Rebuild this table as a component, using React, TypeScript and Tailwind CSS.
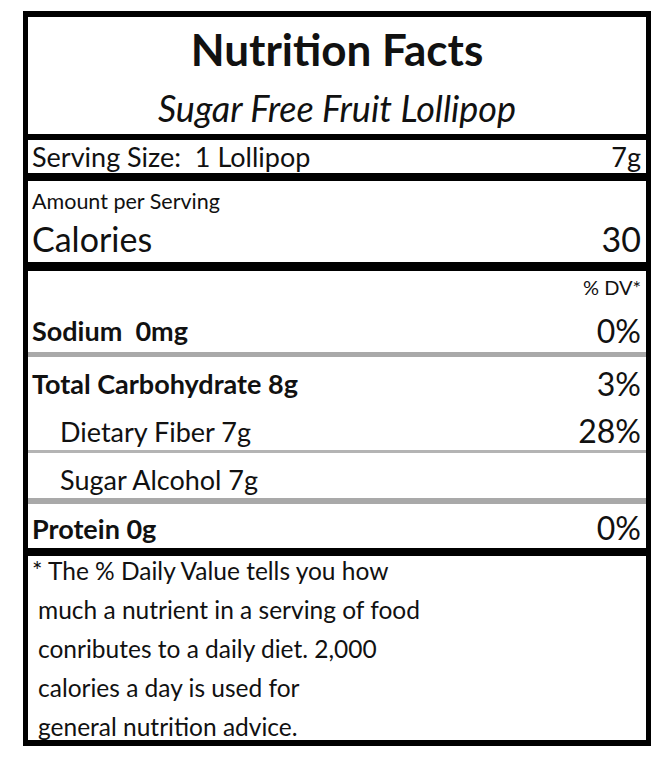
import React from 'react';

const rows = [
  { label: 'Total Carbohydrate 8g', value: '3%', bold: true },
];

export default function App() {
  return (
    <div className="min-h-[763px] w-[670px] bg-white pt-[11px] pl-[23px] text-[#111]" style={{ fontFamily: 'Lato, "Open Sans", sans-serif' }}>
      <div className="w-[628px] border-x-[5px] border-y-[6px] border-black">
        {/* Header */}
        <div className="flex h-[63px] items-center justify-center text-[44px] font-bold leading-[44px]">
          Nutrition Facts
        </div>
        <div className="flex h-[54px] items-center justify-center pt-[2px] text-[36px] italic leading-[36px]">
          Sugar Free Fruit Lollipop
        </div>
        <div className="h-[6px] bg-black" />

        {/* Serving */}
        <div className="flex h-[33px] items-center justify-between pl-[4px] pr-[5px] text-[27px] leading-[27px]">
          <span>Serving Size:&nbsp; 1 Lollipop</span>
          <span>7g</span>
        </div>
        <div className="h-[8px] bg-black" />

        {/* Calories */}
        <div className="flex h-[41px] items-center pl-[4px] text-[21.5px] leading-[21px]">Amount per Serving</div>
        <div className="flex h-[40px] items-center justify-between pb-[6px] pl-[4px] pr-[5px] text-[34px] leading-[34px]">
          <span>Calories</span>
          <span>30</span>
        </div>
        <div className="h-[9px] bg-black" />

        {/* Daily values */}
        <div className="flex h-[32px] items-center justify-end pr-[5px] text-[20px] leading-[20px]">% DV*</div>
        <div className="flex h-[49px] items-center justify-between pl-[4px] pr-[5px] pt-[6px]">
          <span className="text-[27px] font-bold leading-[27px]">Sodium&nbsp; 0mg</span>
          <span className="text-[32px] leading-[32px]">0%</span>
        </div>
        <div className="h-[5px] bg-[#a9a9a9]" />

        <div className="flex h-[51px] items-center justify-between pl-[4px] pr-[5px] pt-[2px]">
          <span className="text-[27px] font-bold leading-[27px]">{rows[0].label}</span>
          <span className="text-[32px] leading-[32px]">{rows[0].value}</span>
        </div>
        <div className="flex h-[42px] items-center justify-between pl-[32px] pr-[5px] pt-[4px]">
          <span className="text-[27px] leading-[27px]">Dietary Fiber 7g</span>
          <span className="text-[32px] leading-[32px]">28%</span>
        </div>
        <div className="h-[3px] bg-[#b4b4b4]" />

        <div className="flex h-[45px] items-center pl-[32px] pt-[8px]">
          <span className="text-[27px] leading-[27px]">Sugar Alcohol 7g</span>
        </div>
        <div className="h-[6px] bg-[#a9a9a9]" />

        <div className="flex h-[44px] items-center justify-between pl-[4px] pr-[5px] pt-[4px]">
          <span className="text-[27px] font-bold leading-[27px]">Protein 0g</span>
          <span className="text-[32px] leading-[32px]">0%</span>
        </div>
        <div className="h-[8px] bg-black" />

        {/* Footnote */}
        <div className="h-[189px] text-[24.5px] leading-[39px]">
          <div className="-mt-[5px] pl-[4px]">* The % Daily Value tells you how</div>
          <div className="pl-[10px]">much a nutrient in a serving of food</div>
          <div className="pl-[10px]">conributes to a daily diet. 2,000</div>
          <div className="pl-[10px]">calories a day is used for</div>
          <div className="pl-[10px]">general nutrition advice.</div>
        </div>
      </div>
    </div>
  );
}
